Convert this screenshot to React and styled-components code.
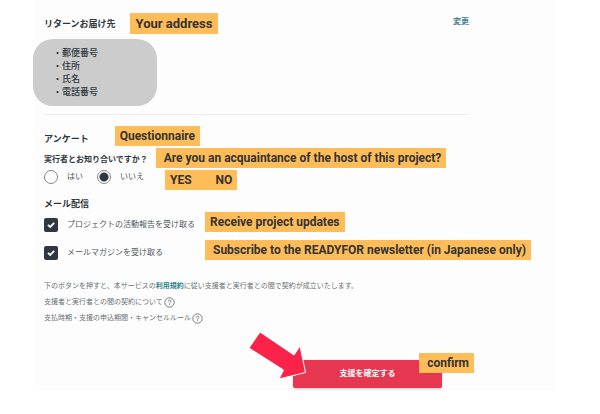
import React from 'react'
import styled, { createGlobalStyle } from 'styled-components'

const App = () => {
    return (
        <>
            <GlobalStyle />
            <Sheet>
                <Header>
                    <Line $gap="14px" $align="center">
                        <Heading>リターンお届け先</Heading>
                        <LargeNote>Your address</LargeNote>
                    </Line>
                    <Change href="#">変更</Change>
                </Header>
                <Address>
                    <li>・郵便番号</li>
                    <li>・住所</li>
                    <li>・氏名</li>
                    <li>・電話番号</li>
                </Address>
                <Divider />

                <Survey>
                    <Line $gap="26px">
                        <Heading>アンケート</Heading>
                        <Note>Questionnaire</Note>
                    </Line>
                    <Line $gap="8px">
                        <Question id="question">実行者とお知り合いですか？</Question>
                        <Note $indent="8px">Are you an acquaintance of the host of this project?</Note>
                    </Line>
                    <Line $gap="21px" $align="flex-start">
                        <Answers role="radiogroup" aria-labelledby="question">
                            <Choice>
                                <Radio name="acquaintance" value="yes" />
                                はい
                            </Choice>
                            <Choice>
                                <Radio name="acquaintance" value="no" defaultChecked />
                                いいえ
                            </Choice>
                        </Answers>
                        <Note>
                            <span>YES</span>
                            <span>NO</span>
                        </Note>
                    </Line>
                </Survey>

                <Mail>
                    <Heading>メール配信</Heading>
                    <MailRow>
                        <Choice>
                            <Tick />
                            プロジェクトの活動報告を受け取る
                        </Choice>
                        <Note>Receive project updates</Note>
                    </MailRow>
                    <MailRow>
                        <Choice>
                            <Tick />
                            メールマガジンを受け取る
                        </Choice>
                        <Note $indent="8px">Subscribe to the READYFOR newsletter (in Japanese only)</Note>
                    </MailRow>
                </Mail>

                <Terms>
                    <p>下のボタンを押すと、本サービスの<a href="#">利用規約</a>に従い支援者と実行者との間で契約が成立いたします。</p>
                    <p>支援者と実行者との間の契約について<Help /></p>
                    <p>支払時期・支援の申込期間・キャンセルルール<Help /></p>
                </Terms>

                <Footer>
                    <Confirm type="button">支援を確定する</Confirm>
                    <Arrow viewBox="0 0 60 50" aria-hidden="true">
                        <path d="M12 3 L1 19 L35.500 41 L31 50 L57.500 43.500 L52 17 L46 26 Z" fill="#fb2349" stroke="#fff" />
                    </Arrow>
                    <Badge $indent="8px">confirm</Badge>
                </Footer>
            </Sheet>
        </>
    )
}

const Help = () => (
    <HelpButton type="button" aria-label="ヘルプ">
        <svg width="11" height="11" viewBox="0 0 11 11" fill="none" stroke="#6b7075">
            <circle cx="5.5" cy="5.5" r="4.700" strokeWidth="0.900" />
            <path d="M4.200 4.500 C4.200 2.700 6.900 2.700 6.900 4.400 C6.900 5.400 5.500 5.400 5.500 6.500 M5.500 7.300 V8.200" strokeWidth="0.900" />
        </svg>
    </HelpButton>
)

const Tick = () => (
    <TickBox>
        <input type="checkbox" defaultChecked />
        <svg viewBox="0 0 14 14" fill="none" stroke="#fff" strokeWidth="1.800" aria-hidden="true">
            <path d="M4 6.800 L6.200 8.900 L10.200 4.900" />
        </svg>
    </TickBox>
)

const GlobalStyle = createGlobalStyle`
    *{
        box-sizing:border-box;
        margin:0;
        padding:0;
    }
    body{
        background:#fff;
        color:#30373e;
        font-family:Roboto, "Noto Sans CJK JP", sans-serif;
    }
`
const Sheet = styled.main`
    margin:0 45px 0 33px;
    padding:13px 0 3px;
    background:#fdfdfd;
    white-space:nowrap;
`
const Line = styled.div`
    display:flex;
    align-items:${props => props.$align || 'flex-end'};
    gap:${props => props.$gap};
`
const Header = styled.header`
    display:flex;
    justify-content:space-between;
    margin:0 86px 0 11px;
`
const Heading = styled.h2`
    font-size:9px;
    line-height:14px;
    font-weight:700;
`
const Note = styled.span`
    display:flex;
    gap:24px;
    padding:0 5px 0 ${props => props.$indent || '5px'};
    background:#ffbd59;
    color:#333;
    font-size:12px;
    line-height:20px;
    font-weight:700;
`
const LargeNote = styled(Note)`
    padding:0 6px;
    font-size:13px;
    line-height:21px;
`
const Change = styled.a`
    color:#44868a;
    font-size:8px;
    line-height:18px;
    font-weight:700;
    text-decoration:none;
`
const Address = styled.ul`
    width:124px;
    margin-top:5px;
    padding:8px 20px 7px;
    border-radius:20px;
    background:#ccc;
    list-style:none;
    font-size:9px;
    line-height:13px;
    font-weight:500;
`
const Divider = styled.hr`
    margin:8px 86px 0 11px;
    border:0;
    border-top:1px solid #eee;
`
const Survey = styled.section`
    display:flex;
    flex-direction:column;
    gap:2px;
    margin-top:11px;
    padding-left:11px;
`
const Question = styled.h3`
    font-size:8px;
    line-height:16px;
    font-weight:700;
`
const Answers = styled.div`
    display:flex;
    gap:14px;
`
const Choice = styled.label`
    display:flex;
    align-items:center;
    gap:9px;
    color:#50565c;
    font-size:8px;
    line-height:14px;
`
const Radio = styled.input.attrs({ type: 'radio' })`
    appearance:none;
    width:14px;
    height:14px;
    border:1px solid #888;
    border-radius:50%;
    background:#fff;
    &:checked{
        background:radial-gradient(circle, #30373e 4px, #fff 5px);
    }
`
const Mail = styled.section`
    margin-top:7px;
    padding-left:11px;
`
const MailRow = styled.div`
    display:grid;
    grid-template-columns:161px max-content;
    align-items:end;
    margin-top:1px;
    & + &{
        margin-top:8px;
    }
`
const TickBox = styled.span`
    display:grid;
    width:14px;
    height:14px;
    input, svg{
        grid-area:1 / 1;
        width:14px;
        height:14px;
    }
    input{
        appearance:none;
        border-radius:2px;
        background:#30373e;
    }
    svg{
        z-index:1;
        pointer-events:none;
    }
`
const Terms = styled.section`
    margin-top:18px;
    padding-left:11px;
    color:#6b7075;
    font-size:7px;
    line-height:16px;
    p{
        display:flex;
        align-items:center;
    }
    a{
        color:#2b8488;
        font-weight:700;
        text-decoration:none;
    }
`
const HelpButton = styled.button`
    display:flex;
    margin-left:1px;
    border:0;
    background:none;
`
const Footer = styled.footer`
    position:relative;
    margin:34px 113px 0 260px;
`
const Confirm = styled.button`
    display:block;
    width:100%;
    border:0;
    border-radius:2px;
    background:#e73650;
    box-shadow:0 1px 3px rgba(0,0,0,0.2);
    color:#fff;
    font-family:inherit;
    font-size:8px;
    line-height:28px;
    font-weight:700;
`
const Arrow = styled.svg`
    position:absolute;
    left:-45px;
    top:-31px;
    width:60px;
    height:50px;
`
const Badge = styled(Note)`
    position:absolute;
    right:-32px;
    top:-7px;
`

export default App
